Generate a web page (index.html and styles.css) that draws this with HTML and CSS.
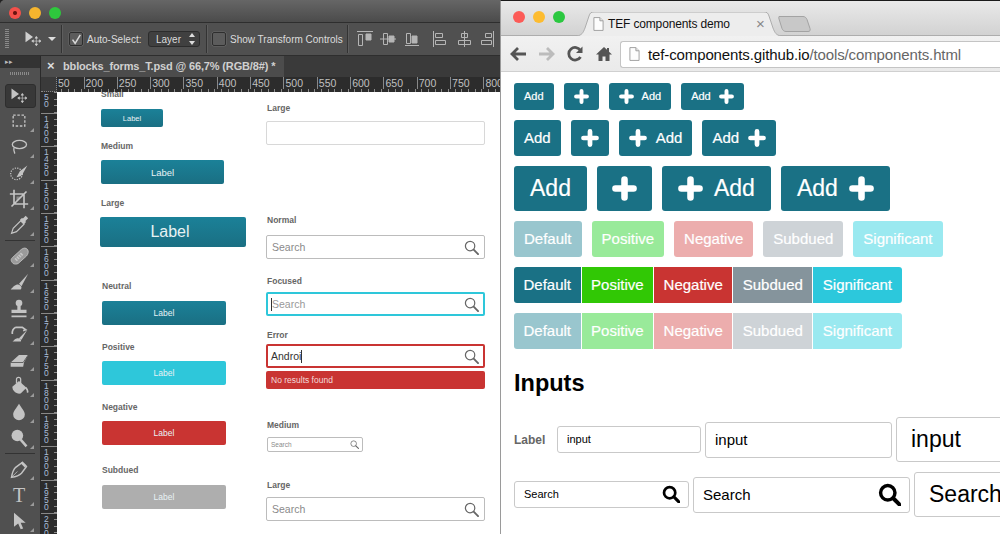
FILE: index.html
```html
<!DOCTYPE html>
<html lang="en">
<head>
<meta charset="utf-8">
<title>Photoshop and TEF components demo</title>
<link rel="stylesheet" href="styles.css">
</head>
<body>
<svg class="sprite" width="0" height="0" aria-hidden="true">
  <symbol id="plus" viewBox="0 0 16 16"><path d="M8 2.200v11.600M2.200 8h11.600" fill="none" stroke="currentColor" stroke-width="4.200" stroke-linecap="round"/></symbol>
  <symbol id="loupe" viewBox="0 0 16 16"><circle cx="6.800" cy="6.800" r="5" fill="none" stroke="currentColor" stroke-width="2.400"/><path d="M10.600 10.600 15 15" fill="none" stroke="currentColor" stroke-width="2.800" stroke-linecap="round"/></symbol>
  <symbol id="loupe-thin" viewBox="0 0 16 16"><circle cx="6.500" cy="6.500" r="5" fill="none" stroke="currentColor" stroke-width="1.300"/><path d="M10.300 10.300 15 15" fill="none" stroke="currentColor" stroke-width="2" stroke-linecap="round"/></symbol>
  <symbol id="move" viewBox="0 0 24 24"><path d="M3 3v13l9-6.500z" fill="currentColor"/><path d="M16 9v11M10.500 14.500h11M16 9l-1.500 2h3zM16 20l-1.500-2h3zM10.500 14.500l2-1.500v3zM21.500 14.500l-2-1.500v3z" fill="currentColor" stroke="currentColor" stroke-width=".8"/></symbol>
  <symbol id="doc" viewBox="0 0 12 15"><path d="M1 .5h6.500L11 4v10.500H1z" fill="#fdfdfd" stroke="#9a9a9a"/><path d="M7.500.5V4H11" fill="#e5e5e5" stroke="#9a9a9a"/></symbol>
</svg>

<section class="ps">
  <header class="ps-title">
    <span class="ps-light ps-red"></span><span class="ps-light ps-yellow"></span><span class="ps-light ps-green"></span>
  </header>
  <div class="ps-options">
    <span class="ps-grip"></span>
    <svg class="ps-opt-move"><use href="#move"/></svg>
    <span class="ps-caret"></span>
    <span class="ps-sep"></span>
    <span class="ps-check ps-checked"><svg viewBox="0 0 14 14" width="14" height="14"><path d="M3 6.500 6 11 12 1" fill="none" stroke="#d8d8d8" stroke-width="1.800"/></svg></span>
    <span class="ps-opt-text ps-auto">Auto-Select:</span>
    <span class="ps-select">Layer<span class="ps-updown"></span></span>
    <span class="ps-sep ps-sep-mid"></span>
    <span class="ps-check"></span>
    <span class="ps-opt-text ps-show">Show Transform Controls</span>
    <span class="ps-sep ps-sep-last"></span>
    <svg class="ps-aligns" width="140" height="18" viewBox="0 0 140 18" fill="none" stroke="#b5b5b5">
      <path d="M0 1.500h16M1.500 4.500h4v11h-4z"/><path d="M9 4h5v6H9z" fill="#b5b5b5"/>
      <path d="M23 9h16M26.500 3.500h4v11h-4z"/><path d="M32 6h5v6h-5z" fill="#b5b5b5"/>
      <path d="M48 15.500h14M49.500 3.500h4v10h-4z"/><path d="M55 6h5v7h-5z" fill="#b5b5b5"/>
      <path d="M76.500 1v16M78.500 3.500h7v4h-7zM78.500 10.500h10v4h-10z"/>
      <path d="M107.500 1v16M104.500 3.500h6v4h-6zM101.500 10.500h12v4h-12z"/>
      <path d="M136.500 1v16M128.500 3.500h6v4h-6zM124.500 10.500h10v4h-10z"/>
    </svg>
  </div>
  <div class="ps-main">
    <aside class="ps-tools">
      <div class="ps-tools-head"><span>&#9656;&#9656;</span></div>
      <div class="ps-tools-grip"></div>
      <div class="tool tool-active"><svg><use href="#move"/></svg></div>
      <div class="tool"><svg viewBox="0 0 24 24"><rect x="5" y="5" width="14" height="13" fill="none" stroke="currentColor" stroke-width="1.600" stroke-dasharray="3 2"/></svg></div>
      <div class="tool"><svg viewBox="0 0 24 24"><ellipse cx="12.500" cy="9" rx="8.500" ry="5" fill="none" stroke="currentColor" stroke-width="1.600"/><path d="M6 13c-1 3 0 5 1 7" fill="none" stroke="currentColor" stroke-width="1.600"/></svg></div>
      <div class="tool"><svg viewBox="0 0 24 24"><circle cx="9" cy="13" r="7" fill="none" stroke="currentColor" stroke-width="1.500" stroke-dasharray="1.500 1.500"/><path d="M22 3 13 10l-4 7c4 0 7-2 8-5z" fill="currentColor"/></svg></div>
      <div class="tool"><svg viewBox="0 0 24 24"><path d="M6 1v17h17M1 6h17v17M3 21 21 3" fill="none" stroke="currentColor" stroke-width="2"/><path d="M9 15V9h6z" fill="currentColor" opacity=".5"/></svg></div>
      <div class="tool"><svg viewBox="0 0 24 24"><path d="M3 22l2-6 9-9 4 4-9 9z" fill="none" stroke="currentColor" stroke-width="1.400"/><path d="M13 6l2-2 2 0 3-3 3 3-3 3v2l-2 2z" fill="currentColor"/></svg></div>
      <div class="tool-sep"></div>
      <div class="tool"><svg viewBox="0 0 24 24"><path d="M5 21c-3-3-3-5-1-7L15 4c3-2 5-2 7 0s1 6-1 8L11 21c-2 1-4 1-6 0z" fill="#9a9a9a" stroke="currentColor"/><path d="M8 17l8-8" stroke="currentColor" stroke-width="4" stroke-dasharray="2 1"/></svg></div>
      <div class="tool"><svg viewBox="0 0 24 24"><path d="M23 2 12 14l3 3z" fill="currentColor"/><path d="M11 15c-4 0-6 3-9 6h12c2-2 1-5-3-6z" fill="currentColor"/></svg></div>
      <div class="tool"><svg viewBox="0 0 24 24"><circle cx="12" cy="6" r="4" fill="currentColor"/><path d="M10 9h4v5h7v4H3v-4h7zM3 21h18v2H3z" fill="currentColor"/></svg></div>
      <div class="tool"><svg viewBox="0 0 24 24"><path d="M8 4h8l4 3-3 1M4 12a8 8 0 0 1 4-8" fill="none" stroke="currentColor" stroke-width="2"/><path d="M22 7 12 17l3 2zM11 17c-4 0-5 3-7 4h10c1-1 1-3-3-4z" fill="currentColor"/></svg></div>
      <div class="tool"><svg viewBox="0 0 24 24"><path d="M2 15 12 6h11l-5 9-1 5H2z" fill="currentColor"/><path d="M2 15h15l6-9" fill="none" stroke="#505050"/></svg></div>
      <div class="tool"><svg viewBox="0 0 24 24"><path d="M4 13 12 6l9 8-7 7c-5 1-10-3-10-8z" fill="currentColor"/><path d="M9 9V4a2.500 2.500 0 0 1 5 0v7" fill="none" stroke="currentColor" stroke-width="1.500"/><path d="M20 14c2 2 3 4 2 6" fill="none" stroke="currentColor" stroke-width="2"/></svg></div>
      <div class="tool"><svg viewBox="0 0 24 24"><path d="M12 2c3 5 7 9 7 13a7 7 0 0 1-14 0c0-4 4-8 7-13z" fill="currentColor"/></svg></div>
      <div class="tool"><svg viewBox="0 0 24 24"><circle cx="10" cy="9" r="7" fill="currentColor"/><path d="M14 14l7 8" stroke="currentColor" stroke-width="3"/></svg></div>
      <div class="tool-sep"></div>
      <div class="tool"><svg viewBox="0 0 24 24"><path d="M3 22c1-6 3-10 5-12l8-6 5 5-6 8c-2 2-6 4-12 5z" fill="none" stroke="currentColor" stroke-width="1.700"/><path d="M3 22l7-7" stroke="currentColor"/><path d="M15 4l5 5" stroke="currentColor" stroke-width="3"/></svg></div>
      <div class="tool"><span class="tool-t">T</span></div>
      <div class="tool"><svg viewBox="0 0 24 24"><path d="M6 2v17l5-4 3 7 3-1-3-7h6z" fill="currentColor"/></svg></div>
    </aside>
    <div class="ps-doc">
      <div class="ps-tabbar">
        <div class="ps-tab"><span class="ps-tab-x">&#215;</span>bblocks_forms_T.psd @ 66,7% (RGB/8#) *</div>
      </div>
      <div class="ps-hruler">
        <span class="ruler-corner"></span>
        <span class="hr hr-first">50</span><span class="hr">200</span><span class="hr">250</span><span class="hr">300</span><span class="hr">350</span><span class="hr">400</span><span class="hr">450</span><span class="hr">500</span><span class="hr">550</span><span class="hr">600</span><span class="hr">650</span><span class="hr">700</span><span class="hr">750</span><span class="hr">800</span>
      </div>
      <div class="ps-work">
        <div class="ps-vruler">
          <span class="vr vr-first">50</span><span class="vr">1400</span><span class="vr">1450</span><span class="vr">1500</span><span class="vr">1550</span><span class="vr">1600</span><span class="vr">1650</span><span class="vr">1700</span><span class="vr">1750</span><span class="vr">1800</span><span class="vr">1850</span><span class="vr">1900</span><span class="vr">1950</span><span class="vr">2000</span>
        </div>
        <div class="art">
          <div class="art-col art-left">
            <div class="art-label art-clip">Small</div>
            <div class="art-btn btn-s teal m9">Label</div>
            <div class="art-label m13">Medium</div>
            <div class="art-btn btn-m teal m8">Label</div>
            <div class="art-label m13">Large</div>
            <div class="art-btn btn-l teal m8">Label</div>
            <div class="art-label art-in m33">Neutral</div>
            <div class="art-btn btn-n teal m9">Label</div>
            <div class="art-label art-in m16">Positive</div>
            <div class="art-btn btn-n cyan m8">Label</div>
            <div class="art-label art-in m16">Negative</div>
            <div class="art-btn btn-n red m8">Label</div>
            <div class="art-label art-in m19">Subdued</div>
            <div class="art-btn btn-n grey m9">Label</div>
          </div>
          <div class="art-col art-right">
            <div class="art-label art-in">Large</div>
            <div class="art-input m7"></div>
            <div class="art-label art-in m69">Normal</div>
            <div class="art-search m9"><span>Search</span><svg><use href="#loupe-thin"/></svg></div>
            <div class="art-label art-in m16">Focused</div>
            <div class="art-search is-focus m5"><span><i class="caret"></i>Search</span><svg><use href="#loupe-thin"/></svg></div>
            <div class="art-label art-in m13">Error</div>
            <div class="art-search is-error m3"><span class="typed">Androi<i class="caret"></i></span><svg><use href="#loupe-thin"/></svg></div>
            <div class="art-msg m3">No results found</div>
            <div class="art-label art-in m30">Medium</div>
            <div class="art-search art-search-s m6"><span>Search</span><svg><use href="#loupe-thin"/></svg></div>
            <div class="art-label art-in m27">Large</div>
            <div class="art-search m6"><span>Search</span><svg><use href="#loupe-thin"/></svg></div>
          </div>
        </div>
      </div>
    </div>
  </div>
</section>

<section class="chrome">
  <header class="ch-tabs">
    <span class="ch-light ch-red"></span><span class="ch-light ch-yellow"></span><span class="ch-light ch-green"></span>
    <div class="ch-tab">
      <svg class="ch-tab-shape" viewBox="0 0 204 24" width="204" height="24"><path d="M0 24c5-1 6-3 8-8l4-12c1-3 2-4 5-4h170c3 0 4 1 5 4l4 12c2 5 3 7 8 8" fill="#ededed" stroke="#adadad"/></svg>
      <svg class="ch-doc"><use href="#doc"/></svg>
      <span class="ch-tab-title">TEF components demo</span>
      <span class="ch-tab-close">&#215;</span>
    </div>
    <svg class="ch-newtab" viewBox="0 0 34 18" width="34" height="18"><path d="M1 1.500h24c2 0 3 1 4 3l3 9c.5 2 0 3-2 3H8c-2 0-3-1-4-3L1 4c-.5-1.500 0-2.500 0-2.500z" fill="#c8c8c8" stroke="#a3a3a3"/></svg>
  </header>
  <div class="ch-toolbar">
    <svg class="ch-nav" viewBox="0 0 18 18"><path d="M9 3 3 9l6 6M3.500 9H17" fill="none" stroke="#555" stroke-width="2.800"/></svg>
    <svg class="ch-nav" viewBox="0 0 18 18"><path d="M9 3l6 6-6 6M14.500 9H1" fill="none" stroke="#bcbcbc" stroke-width="2.800"/></svg>
    <svg class="ch-nav" viewBox="0 0 18 18"><path d="M14.500 12a6.300 6.300 0 1 1 0-6.500" fill="none" stroke="#555" stroke-width="2.800"/><path d="M16.500 1.500v6.500H10z" fill="#555"/></svg>
    <svg class="ch-nav" viewBox="0 0 18 18"><path d="M9 2 1 9.500h2.500V16h4v-4.500h3V16h4V9.500H17l-3-2.800V3h-2v1.800z" fill="#555"/></svg>
    <div class="ch-omni">
      <svg class="ch-doc"><use href="#doc"/></svg>
      <span class="ch-url">tef-components.github.io<span class="ch-path">/tools/components.html</span></span>
    </div>
  </div>
  <main class="page">
    <div class="row">
      <button class="b b-s">Add</button>
      <button class="b b-s b-ico"><svg><use href="#plus"/></svg></button>
      <button class="b b-s"><svg><use href="#plus"/></svg>Add</button>
      <button class="b b-s">Add<svg><use href="#plus"/></svg></button>
    </div>
    <div class="row">
      <button class="b b-m">Add</button>
      <button class="b b-m b-ico"><svg><use href="#plus"/></svg></button>
      <button class="b b-m"><svg><use href="#plus"/></svg>Add</button>
      <button class="b b-m">Add<svg><use href="#plus"/></svg></button>
    </div>
    <div class="row">
      <button class="b b-l">Add</button>
      <button class="b b-l b-ico"><svg><use href="#plus"/></svg></button>
      <button class="b b-l"><svg><use href="#plus"/></svg>Add</button>
      <button class="b b-l">Add<svg><use href="#plus"/></svg></button>
    </div>
    <div class="row">
      <button class="b b-m v-default dim">Default</button>
      <button class="b b-m v-positive dim">Positive</button>
      <button class="b b-m v-negative dim">Negative</button>
      <button class="b b-m v-subdued dim">Subdued</button>
      <button class="b b-m v-significant dim">Significant</button>
    </div>
    <div class="row group">
      <button class="b b-m v-default">Default</button>
      <button class="b b-m v-positive">Positive</button>
      <button class="b b-m v-negative">Negative</button>
      <button class="b b-m v-subdued">Subdued</button>
      <button class="b b-m v-significant">Significant</button>
    </div>
    <div class="row group">
      <button class="b b-m v-default dim">Default</button>
      <button class="b b-m v-positive dim">Positive</button>
      <button class="b b-m v-negative dim">Negative</button>
      <button class="b b-m v-subdued dim">Subdued</button>
      <button class="b b-m v-significant dim">Significant</button>
    </div>
    <h2 class="heading">Inputs</h2>
    <div class="in-row in-row-first">
      <span class="in-label">Label</span>
      <div class="in in-s w-144"><span>input</span></div>
      <div class="in in-m w-187"><span>input</span></div>
      <div class="in in-l w-200"><span>input</span></div>
    </div>
    <div class="in-row">
      <div class="in in-s w-175"><span>Search</span><svg><use href="#loupe"/></svg></div>
      <div class="in in-m w-217"><span>Search</span><svg><use href="#loupe"/></svg></div>
      <div class="in in-l w-200"><span>Search</span></div>
    </div>
  </main>
</section>
</body>
</html>
```
FILE: styles.css
```css
* { box-sizing: border-box; }
html, body { margin: 0; height: 100%; }
body {
  width: 1000px; height: 534px; overflow: hidden; display: flex;
  background: #222;
  font-family: "Liberation Sans", Arial, sans-serif;
}
.sprite { position: absolute; }

/* ---------- Photoshop window ---------- */
.ps { width: 500px; height: 534px; flex: none; display: flex; flex-direction: column; background: #505050; overflow: hidden; border-radius: 5px 0 0 0; }
.ps-title { height: 23px; flex: none; display: flex; align-items: center; gap: 8px; padding: 3px 0 0 9px; background: linear-gradient(#666, #4b4b4b); border-bottom: 1px solid #2e2e2e; }
.ps-light { width: 12px; height: 12px; border-radius: 50%; }
.ps-red { background: radial-gradient(circle, #6b1310 0 1.5px, #f4504a 2.5px); }
.ps-yellow { background: #f5b52e; }
.ps-green { background: #2ec83d; }

.ps-options { height: 33px; flex: none; display: flex; align-items: center; background: #505050; border-bottom: 1px solid #2e2e2e; color: #dcdcdc; }
.ps-options > * { flex: none; }
.ps-grip { width: 4px; height: 20px; margin-left: 5px; background: repeating-linear-gradient(#8a8a8a 0 1px, transparent 1px 2px); }
.ps-opt-move { width: 20px; height: 20px; margin-left: 14px; color: #cfcfcf; }
.ps-caret { width: 0; height: 0; margin-left: 5px; border: 4px solid transparent; border-top-color: #ddd; border-bottom: 0; }
.ps-sep { width: 1px; height: 28px; margin: 0 7px 0 5px; background: #333; box-shadow: 1px 0 #5e5e5e; }
.ps-sep-mid { margin: 0 5px 0 6px; }
.ps-check { width: 14px; height: 14px; border: 1px solid #2e2e2e; border-radius: 2px; background: #5c5c5c; box-shadow: 0 0 0 .5px #6a6a6a; display: flex; }
.ps-opt-text { font-size: 10px; white-space: nowrap; }
.ps-auto { width: 55px; margin-left: 4px; }
.ps-show { width: 112px; margin-left: 4px; }
.ps-select { display: flex; align-items: center; width: 52px; height: 16px; margin-left: 6px; padding-left: 7px; font-size: 10px; background: #404040; border: 1px solid #2c2c2c; border-radius: 3px; position: relative; }
.ps-updown { position: absolute; right: 4px; top: 2px; width: 6px; height: 10px; }
.ps-updown::before, .ps-updown::after { content: ""; position: absolute; left: 0; border: 3px solid transparent; }
.ps-updown::before { top: -1px; border-top: 0; border-bottom: 4px solid #ddd; }
.ps-updown::after { bottom: -1px; border-bottom: 0; border-top: 4px solid #ddd; }
.ps-sep-last { margin-left: 5px; margin-right: 9px; }

.ps-main { flex: 1; display: flex; min-height: 0; }
.ps-tools { width: 41px; flex: none; background: #505050; border-right: 1px solid #2a2a2a; display: flex; flex-direction: column; align-items: center; }
.ps-tools-head { width: 100%; height: 12px; background: #333; color: #bbb; font-size: 7px; line-height: 12px; padding-left: 5px; }
.ps-tools-grip { width: 20px; height: 4px; margin: 4px 0 9px; background: repeating-linear-gradient(90deg, #8a8a8a 0 1px, transparent 1px 2px); }
.tool { width: 31px; height: 26px; flex: none; display: flex; align-items: center; justify-content: center; color: #c4c4c4; position: relative; }
.tool::after { content: ""; position: absolute; right: 2px; bottom: 2px; border: 2px solid transparent; border-right-color: #9a9a9a; border-bottom-color: #9a9a9a; }
.tool svg { width: 20px; height: 20px; margin-left: -2px; }
.tool-active { height: 24px; background: #383838; border-radius: 3px; border: 1px solid #2e2e2e; }
.tool-active::after { display: none; }
.tool-sep { width: 30px; height: 1px; flex: none; margin: 2px 0; background: #333; }
.tool-t { font: 20px/1 "Liberation Serif", serif; color: #c4c4c4; margin-left: -2px; }

.ps-doc { flex: 1; min-width: 0; display: flex; flex-direction: column; }
.ps-tabbar { height: 21px; flex: none; background: #3a3a3a; }
.ps-tab { width: 243px; height: 21px; background: #4c4c4c; color: #d0d0d0; font-size: 11px; font-weight: bold; line-height: 20px; white-space: nowrap; letter-spacing: -.15px; padding-left: 6px; }
.ps-tab-x { display: inline-block; width: 16px; font-size: 13px; color: #ddd; }
.ps-hruler { height: 15px; flex: none; display: flex; background: #2c2c2c; background-image: repeating-linear-gradient(90deg, #8c8c8c 0 1px, transparent 1px 6.670px); background-size: 100% 3px; background-repeat: no-repeat; background-position: 0 bottom; overflow: hidden; }
.ruler-corner { width: 16px; flex: none; background: #3a3a3a; border-right: 1px dotted #888; border-bottom: 1px dotted #888; }
.hr { width: 33.330px; flex: none; height: 12px; padding-left: 1px; color: #c0c0c0; font-size: 10.500px; line-height: 12px; border-left: 1px solid #888; }
.hr-first { width: 26.500px; border-left: 0; }
.ps-work { flex: 1; display: flex; min-height: 0; }
.ps-vruler { width: 16px; flex: none; background: #2c2c2c; background-image: repeating-linear-gradient(#8c8c8c 0 1px, transparent 1px 6.670px); background-size: 3px 100%; background-repeat: no-repeat; background-position: right 0; overflow: hidden; }
.vr { display: block; height: 33.330px; width: 100%; padding: 2px 8px 0 3px; color: #a8bcd8; font-size: 8.500px; line-height: 7px; word-break: break-all; border-top: 1px solid #888; }
.vr-first { height: 21px; border-top: 0; padding-top: 2px; }

.art { flex: 1; min-width: 0; height: 100%; overflow: hidden; background: #fff; display: flex; }
.art-col { display: flex; flex-direction: column; align-items: flex-start; }
.art-left { width: 209px; padding: 0 0 0 44px; margin-top: -4px; flex: none; }
.art-right { width: 219px; flex: none; padding-top: 10px; }
.art-label { height: 12px; font-size: 8.500px; line-height: 12px; font-weight: bold; color: #666; white-space: nowrap; }
.art-in { margin-left: 1px; }
.art-btn { display: flex; align-items: center; justify-content: center; color: #e8f2f4; border-radius: 2px; flex: none; }
.btn-s { width: 62px; height: 18px; font-size: 7.500px; }
.btn-m { width: 123px; height: 24px; font-size: 9.500px; }
.btn-l { width: 146px; height: 30px; margin-left: -1px; padding-right: 6px; font-size: 16px; }
.btn-n { width: 124px; height: 24px; margin-left: 1px; font-size: 8.500px; }
.teal { background: linear-gradient(#1b8198, #1a6f83); }
.cyan { background: #2ec7da; }
.red { background: #c93432; }
.grey { background: #aeaeae; }
.art-input { width: 219px; height: 24px; border: 1px solid #d8d8d8; border-radius: 2px; flex: none; }
.art-search { width: 219px; height: 24px; flex: none; display: flex; align-items: center; justify-content: space-between; padding: 0 5px; border: 1px solid #bcbcbc; border-radius: 2px; font-size: 10.500px; color: #8a8a8a; }
.art-search svg { width: 15px; height: 15px; color: #666; }
.art-search span { display: flex; align-items: center; }
.art-search-s { width: 96px; height: 15px; margin-left: 1px; padding: 0 3px; font-size: 6.500px; }
.art-search-s svg { width: 9px; height: 9px; }
.is-focus { border: 2px solid #2ec7da; color: #999; padding-left: 3px; padding-right: 4px; }
.is-error { border: 2px solid #c93432; padding-left: 3px; padding-right: 4px; }
.typed { color: #333; }
.caret { display: inline-block; width: 1px; height: 13px; background: #333; }
.art-msg { width: 219px; height: 18px; flex: none; padding-left: 5px; background: #c93432; color: #f2dada; border-radius: 2px; font-size: 8.500px; line-height: 18px; }
.m3 { margin-top: 3px; } .m5 { margin-top: 5px; } .m6 { margin-top: 6px; } .m7 { margin-top: 7px; }
.m8 { margin-top: 8px; } .m9 { margin-top: 9px; } .m13 { margin-top: 13px; } .m16 { margin-top: 16px; }
.m19 { margin-top: 19px; } .m27 { margin-top: 27px; } .m30 { margin-top: 30px; } .m33 { margin-top: 33px; } .m69 { margin-top: 69px; }

/* ---------- Browser window ---------- */
.chrome { flex: 1; min-width: 0; height: 534px; display: flex; flex-direction: column; background: #fff; border-left: 1px solid #9a9a9a; overflow: hidden; border-top: 1px solid #1a1a1a; }
.ch-tabs { height: 35px; flex: none; display: flex; align-items: center; gap: 8px; padding-left: 12px; background: linear-gradient(#e9e9e9, #d2d2d2); border-bottom: 1px solid #adadad; position: relative; }
.ch-light { width: 12px; height: 12px; border-radius: 50%; margin-top: -3px; }
.ch-red { background: #fc5b57; }
.ch-yellow { background: #fdbc30; }
.ch-green { background: #2bc840; }
.ch-tab { width: 204px; height: 24px; margin: 11px 0 0 4px; flex: none; display: flex; align-items: center; position: relative; padding-left: 16px; }
.ch-tab-shape { position: absolute; left: 0; top: 0; }
.ch-tab .ch-doc, .ch-tab-title, .ch-tab-close { position: relative; }
.ch-doc { width: 11px; height: 14px; flex: none; }
.ch-tab-title { margin-left: 4px; font-size: 12px; letter-spacing: -.15px; color: #111; white-space: nowrap; }
.ch-tab-close { margin-left: 26px; font-size: 15px; color: #888; }
.ch-newtab { margin: 12px 0 0 -11px; flex: none; }
.ch-toolbar { height: 36px; flex: none; display: flex; align-items: center; padding-left: 8px; background: linear-gradient(#f1f1f1, #eaeaea); border-bottom: 1px solid #d0d0d0; }
.ch-nav { width: 18px; height: 18px; flex: none; margin-right: 10.500px; }
.ch-omni { flex: 1; height: 27px; margin: 1px 0 0 -3px; display: flex; align-items: center; gap: 8px; padding-left: 8px; background: #fff; border: 1px solid #c4c4c4; border-right: 0; border-radius: 3px 0 0 3px; }
.ch-url { font-size: 15px; color: #111; white-space: nowrap; letter-spacing: -.12px; }
.ch-path { color: #666; }

.page { flex: 1; padding: 11px 0 0 13px; overflow: hidden; min-height: 0; }
.row { display: flex; gap: 10px; margin-bottom: 10px; }
.group { gap: 1px; }
.b { display: inline-flex; align-items: center; justify-content: center; flex: none; border: 0; margin: 0; font-family: inherit; color: #fff; background: #1a7185; border-radius: 3px; -webkit-text-stroke: .2px currentColor; }
.b svg { flex: none; color: #fff; }
.b-s { height: 27px; padding: 0 10px 1px; gap: 8px; font-size: 11px; }
.b-s svg { width: 15px; height: 15px; }
.b-m { height: 36px; padding: 0 10px 1px; gap: 9px; font-size: 15px; }
.b-m svg { width: 18px; height: 18px; }
.b-l { height: 45px; padding: 0 16px; gap: 11px; font-size: 23px; }
.b-l svg { width: 25px; height: 25px; }
.b-s.b-ico { width: 35px; } .b-m.b-ico { width: 38px; } .b-l.b-ico { width: 55px; }
.v-default { background: #1a7185; }
.v-positive { background: #31c805; }
.v-negative { background: #c93432; }
.v-subdued { background: #85949c; }
.v-significant { background: #2cc8dc; }
.v-default.dim { background: #99c6ce; }
.v-positive.dim { background: #99ea9a; }
.v-negative.dim { background: #ecadad; }
.v-subdued.dim { background: #ced3d7; }
.v-significant.dim { background: #9ae9f0; }
.group .b { border-radius: 0; padding-left: 9.500px; padding-right: 9.500px; }
.group .b:first-child { border-radius: 3px 0 0 3px; }
.group .b:last-child { border-radius: 0 3px 3px 0; }
.heading { height: 28px; margin: 20px 0 20px; font-size: 23.500px; line-height: 28px; color: #000; }
.in-row { display: flex; align-items: center; gap: 4px; height: 45px; margin-bottom: 10px; }
.in-label { width: 39px; flex: none; font-size: 12px; font-weight: bold; color: #666; }
.in { display: flex; flex: none; align-items: center; justify-content: space-between; border: 1px solid #c9c9c9; border-radius: 3px; color: #000; background: #fff; }
.in-s { height: 27px; padding: 0 9px 1px; font-size: 11px; }
.in-s svg { width: 18px; height: 18px; margin-right: -1px; }
.in-m { height: 36px; padding: 0 9px 1px; font-size: 15px; }
.in-m svg { width: 23px; height: 23px; margin-right: -1px; }
.in-l { height: 45px; padding: 0 14px; font-size: 23px; }
.w-144 { width: 144px; } .w-187 { width: 187px; } .w-175 { width: 175px; } .w-217 { width: 217px; } .w-200 { width: 200px; }
```
